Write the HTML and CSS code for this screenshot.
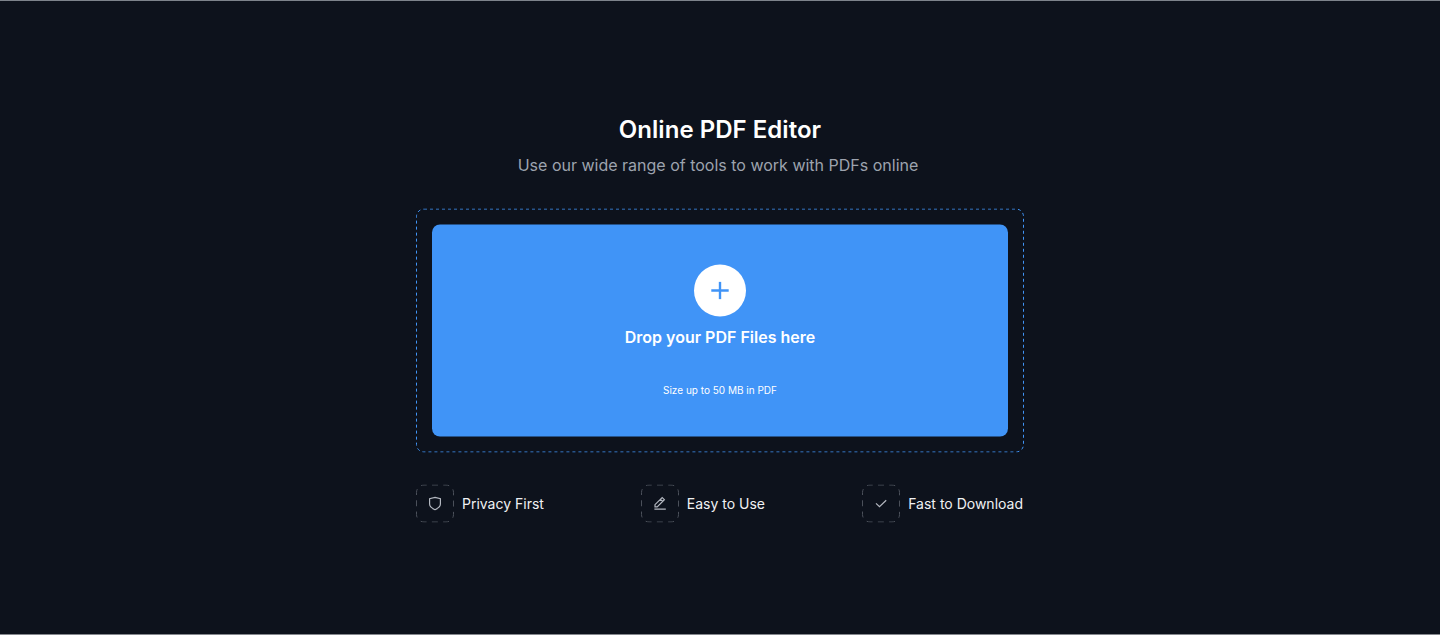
FILE: index.html
```html
<!DOCTYPE html>
<html lang="en">
<head>
<meta charset="utf-8">
<title>Online PDF Editor</title>
<link rel="stylesheet" href="styles.css">
</head>
<body>
<main class="page">
  <h1 class="title">Online PDF Editor</h1>
  <p class="subtitle">Use our wide range of tools to work with PDFs online</p>
  <section class="dropzone">
    <svg class="outline" viewBox="0 0 608 244"><rect class="outline-blue" x=".5" y=".5" width="607" height="243" rx="7.5"/></svg>
    <div class="drop-card">
      <div class="plus"><svg width="18" height="18" viewBox="0 0 18 18"><path d="M9 0.3v17.4M0.3 9h17.4"/></svg></div>
      <h2 class="drop-title">Drop your PDF Files here</h2>
      <p class="drop-note">Size up to 50 MB in PDF</p>
    </div>
  </section>
  <ul class="features">
    <li class="feature">
      <span class="badge"><svg class="outline" viewBox="0 0 38 38"><rect class="outline-gray" x=".5" y=".5" width="37" height="37" rx="7.5"/></svg>
      <svg class="icon" width="16" height="16" viewBox="0 0 16 16"><path d="M8 1.8 13.4 3.2V8.6c0 2.6-2.2 4.2-5.4 5.6-3.2-1.4-5.4-3-5.4-5.6V3.2z"/></svg></span>
      <span class="label">Privacy First</span>
    </li>
    <li class="feature">
      <span class="badge"><svg class="outline" viewBox="0 0 38 38"><rect class="outline-gray" x=".5" y=".5" width="37" height="37" rx="7.5"/></svg>
      <svg class="icon" width="16" height="16" viewBox="0 0 16 16"><path d="M3 11.4V9.2L10.2 2l2.2 2.2-7.2 7.2zM8.4 3.8l2.2 2.2M2.4 13.7h11.4"/></svg></span>
      <span class="label">Easy to Use</span>
    </li>
    <li class="feature">
      <span class="badge"><svg class="outline" viewBox="0 0 38 38"><rect class="outline-gray" x=".5" y=".5" width="37" height="37" rx="7.5"/></svg>
      <svg class="icon" width="16" height="16" viewBox="0 0 16 16"><path d="M3 7.9l3.5 3.3L13.2 4.7"/></svg></span>
      <span class="label">Fast to Download</span>
    </li>
  </ul>
</main>
</body>
</html>
```
FILE: styles.css
```css
* { box-sizing: border-box; margin: 0; padding: 0; }
body { background: #0d121c; font-family: Inter, sans-serif; color: #fff; }
.page {
  height: 635px;
  padding-top: 112px;
  border-top: 1px solid #7d838b;
  border-bottom: 1px solid #85888e;
  display: flex;
  flex-direction: column;
  align-items: center;
}
.title { font-size: 24px; line-height: 32px; font-weight: 600; letter-spacing: .03px; transform: translateY(.5px); }
.subtitle { margin-top: 8px; margin-right: 4px; font-size: 16px; line-height: 24px; color: #9da3ae; }
.dropzone { position: relative; width: 608px; height: 244px; margin-top: 32px; padding: 16px; transform: translateY(-.5px); }
.outline { position: absolute; inset: 0; width: 100%; height: 100%; fill: none; }
.outline-blue { stroke: #4094f7; stroke-dasharray: 3 3; }
.outline-gray { stroke: #4b505a; stroke-dasharray: 6 5.26; stroke-dashoffset: 3.26px; }
.drop-card { height: 212px; border-radius: 8px; background: #4094f7; display: flex; flex-direction: column; align-items: center; padding-top: 40px; }
.plus { width: 52px; height: 52px; border-radius: 50%; background: #fff; display: flex; align-items: center; justify-content: center; }
.plus path { stroke: #4094f7; stroke-width: 2.4; }
.drop-title { margin-top: 8px; font-size: 16px; line-height: 24px; font-weight: 600; }
.drop-note { margin-top: 33px; font-size: 10px; line-height: 16px; }
.features { width: 608px; margin-top: 32px; display: flex; justify-content: space-between; list-style: none; transform: translateY(-.5px); }
.feature { display: flex; align-items: center; gap: 8px; }
.feature:last-child { margin-right: 1px; }
.feature:nth-child(2) { margin-right: .4px; }
.badge { position: relative; width: 38px; height: 38px; display: flex; align-items: center; justify-content: center; }
.icon { fill: none; stroke: #b4b8c0; stroke-width: 1.2; }
.label { font-size: 14px; line-height: 20px; color: #f0f1f3; white-space: nowrap; }
```
